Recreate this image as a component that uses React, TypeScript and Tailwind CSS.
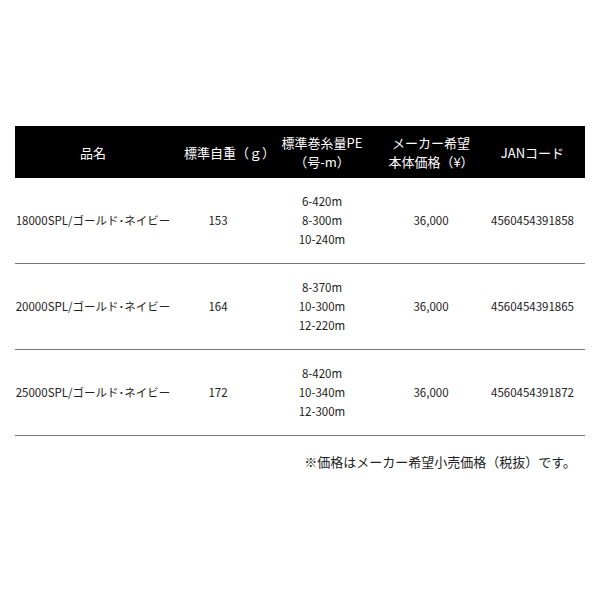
import React from 'react';

type Row = {
  name: string;
  weight: string;
  lines: string[];
  price: string;
  jan: string;
};

const rows: Row[] = [
  { name: '18000SPL/ゴールド･ネイビー', weight: '153', lines: ['6-420m', '8-300m', '10-240m'], price: '36,000', jan: '4560454391858' },
  { name: '20000SPL/ゴールド･ネイビー', weight: '164', lines: ['8-370m', '10-300m', '12-220m'], price: '36,000', jan: '4560454391865' },
  { name: '25000SPL/ゴールド･ネイビー', weight: '172', lines: ['8-420m', '10-340m', '12-300m'], price: '36,000', jan: '4560454391872' },
];

// column widths, left to right
const cols = ['w-[156px]', 'w-[94px]', 'w-[114px]', 'w-[104px]', 'w-[99px]'];

const App: React.FC = () => {
  return (
    <div
      className="w-[600px] h-[600px] bg-white px-[15px] pt-[126px] text-[#222]"
      style={{ fontFamily: '"Noto Sans CJK JP", "Noto Sans", sans-serif' }}
    >
      {/* Header */}
      <div className="flex h-[52px] items-center bg-black text-[13px] leading-[19px] text-white">
        <div className={`${cols[0]} text-center`}>品名</div>
        <div className={`${cols[1]} pl-[13px] text-center whitespace-nowrap`}>標準自重（ｇ）</div>
        <div className={`${cols[2]} text-center`}>
          標準巻糸量PE
          <br />
          （号-m）
        </div>
        <div className={`${cols[3]} text-center`}>
          メーカー希望
          <br />
          本体価格（¥）
        </div>
        <div className={`${cols[4]} text-center`}>JANコード</div>
      </div>

      {/* Rows */}
      {rows.map(row => (
        <div
          key={row.jan}
          className="flex h-[86px] items-center border-b border-[#777] text-[11.5px] leading-[19px]"
        >
          <div className={`${cols[0]} text-center whitespace-nowrap`}>{row.name}</div>
          <div className={`${cols[1]} text-center`}>{row.weight}</div>
          <div className={`${cols[2]} text-center`}>
            {row.lines.map(l => (
              <div key={l}>{l}</div>
            ))}
          </div>
          <div className={`${cols[3]} text-center`}>{row.price}</div>
          <div className={`${cols[4]} text-center`}>{row.jan}</div>
        </div>
      ))}

      {/* Note */}
      <div className="mt-[16px] pr-[9px] text-right text-[13px] leading-[19px]">
        ※価格はメーカー希望小売価格（税抜）です。
      </div>
    </div>
  );
};

export default App;
